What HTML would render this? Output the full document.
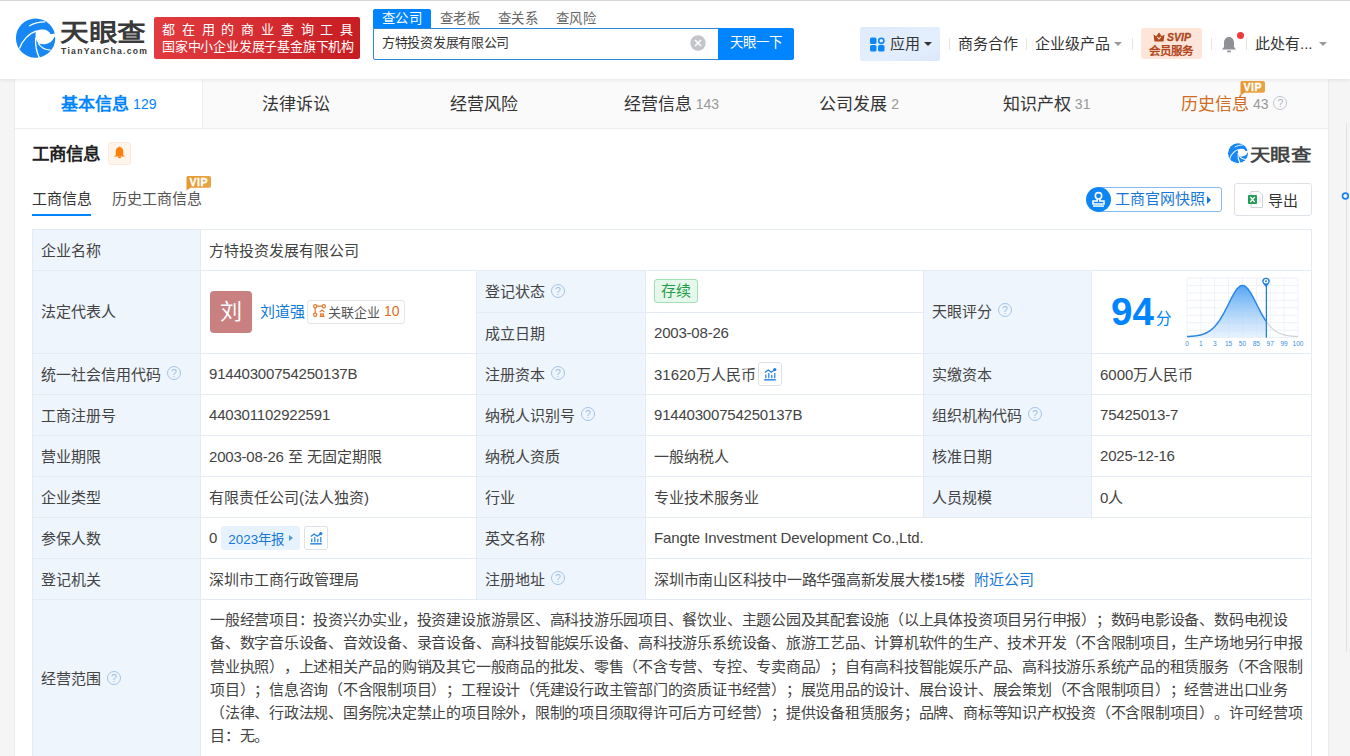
<!DOCTYPE html>
<html lang="zh-CN">
<head>
<meta charset="utf-8">
<style>
*{margin:0;padding:0;box-sizing:border-box}
html,body{width:1350px;height:756px;overflow:hidden}
body{background:#f5f5f5;font-family:"Liberation Sans",sans-serif;color:#333;position:relative}
.a{position:absolute;white-space:nowrap}
#hdr{position:absolute;left:0;top:0;width:1350px;height:79px;background:#fff;box-shadow:inset 0 1px #d6d6d6,0 1px 4px rgba(0,0,0,.09);z-index:5}
.sep{position:absolute;top:38px;width:1px;height:12px;background:#e4e4e4}
.caret{position:absolute;width:0;height:0;border-left:4px solid transparent;border-right:4px solid transparent;border-top:4px solid #333}
#card{position:absolute;left:14px;top:79px;width:1315px;height:700px;background:#fff;border-left:1px solid #ececec;border-right:1px solid #ebebeb}
.tab{position:absolute;top:1px;height:49px;font-size:17px;line-height:49px;text-align:center;color:#333}
.tab .n{font-size:14px;color:#999;margin-left:4px;position:relative;top:-1.5px;font-family:"Liberation Sans",sans-serif}
.q{display:inline-block;width:14px;height:14px;border:1.3px solid #a3c3e4;border-radius:50%;font-size:10.5px;line-height:12px;text-align:center;color:#9dbfe2;vertical-align:middle;font-family:"Liberation Sans",sans-serif}
.dg{letter-spacing:-0.2px}
#tbl{position:absolute;left:32px;top:229px;width:1280px;height:540px;background:#e4ebf2}
.c{position:absolute;background:#fff;font-size:15px;color:#434343;padding-left:8px;padding-bottom:2px;display:flex;align-items:center;white-space:nowrap}
.l{background:#eef5fd}
</style>
</head>
<body>
<div id="hdr">
  <!-- logo -->
  <svg class="a" style="left:12px;top:14px" width="48" height="48" viewBox="0 0 48 48">
<circle cx="23.6" cy="24.1" r="19.7" fill="#1787f5"/>
<path d="M24,16.8 C30,14.5 36.5,14.8 38.7,20.3 L46,19 L46,26 L42.6,22.8 C39.5,30 32,31.8 26.7,29.3 C23.5,27.5 23,21 24,16.8 Z" fill="#fff"/>
<path d="M17.1,11.9 C22,9.2 28,7.8 33.2,7.9" stroke="#fff" stroke-width="1.1" fill="none"/>
<path d="M7.4,34.6 C10,27 16.5,19.5 24.6,16.9" stroke="#fff" stroke-width="1.3" fill="none"/>
<path d="M23.6,23.5 C23.2,30 24.5,38 27.6,44.2" stroke="#fff" stroke-width="1.3" fill="none"/>
<path d="M26.2,29.0 C28.5,33.2 33,35.8 38.6,36.2" stroke="#fff" stroke-width="1.3" fill="none"/>
</svg>
  <div class="a" style="left:60px;top:20px;font-size:28px;font-weight:700;color:#3a3a3a;line-height:32px;transform:scale(1.024,0.845);transform-origin:0 0">天眼查</div>
  <div class="a" style="left:61px;top:46px;font-size:8.6px;font-weight:700;color:#3a3a3a;letter-spacing:1.3px;line-height:11px">TianYanCha.com</div>
  <div class="a" style="left:154px;top:17px;width:206px;height:42px;background:linear-gradient(100deg,#e23c40,#c71d22);border-radius:2px"></div>
  <div class="a" style="left:162px;top:22px;font-size:13px;color:#fff;letter-spacing:6.8px;line-height:16px">都在用的商业查询工具</div>
  <div class="a" style="left:162px;top:39px;font-size:13px;letter-spacing:-0.2px;color:#fff;line-height:16px">国家中小企业发展子基金旗下机构</div>

  <!-- search -->
  <div class="a" style="left:373px;top:9px;width:58px;height:19px;background:#0084ff;border-radius:2px 2px 0 0"></div>
  <div class="a" style="left:382px;top:10px;font-size:13.4px;letter-spacing:0.4px;color:#fff;line-height:18px">查公司</div>
  <div class="a" style="left:440px;top:10px;font-size:13.4px;letter-spacing:0.4px;color:#666;line-height:18px">查老板</div>
  <div class="a" style="left:498px;top:10px;font-size:13.4px;letter-spacing:0.4px;color:#666;line-height:18px">查关系</div>
  <div class="a" style="left:556px;top:10px;font-size:13.4px;letter-spacing:0.4px;color:#666;line-height:18px">查风险</div>
  <div class="a" style="left:373px;top:28px;width:346px;height:32px;border:1px solid #2f86d6;border-radius:0 0 0 2px;background:#fff"></div>
  <div class="a" style="left:382px;top:34px;font-size:13px;letter-spacing:-0.3px;color:#333;line-height:18px">方特投资发展有限公司</div>
  <svg class="a" style="left:690px;top:35px" width="16" height="16" viewBox="0 0 16 16"><circle cx="8" cy="8" r="7.7" fill="#c3c5ca"/><path d="M5 5L11 11M11 5L5 11" stroke="#fff" stroke-width="1.5"/></svg>
  <div class="a" style="left:718px;top:28px;width:76px;height:32px;background:#0084ff;border-radius:0 2px 2px 0"></div>
  <div class="a" style="left:730px;top:34px;font-size:13.5px;color:#fff;line-height:18px">天眼一下</div>

  <!-- right nav -->
  <div class="a" style="left:860px;top:27px;width:80px;height:34px;background:linear-gradient(160deg,#deebfc 0%,#e4effd 60%,#dce8fa 100%);border-radius:2px"></div>
  <svg class="a" style="left:870px;top:37px" width="15" height="15" viewBox="0 0 15 15">
    <rect x="0" y="0.5" width="6.5" height="6.5" rx="1.6" fill="#0c86f5"/>
    <circle cx="11.3" cy="3.8" r="2.6" fill="none" stroke="#0c86f5" stroke-width="1.6"/>
    <rect x="0" y="8" width="6.5" height="6.5" rx="1.6" fill="#0c86f5"/>
    <rect x="8" y="8" width="6.5" height="6.5" rx="1.6" fill="#0c86f5"/>
  </svg>
  <div class="a" style="left:890px;top:34px;font-size:15px;color:#333;line-height:20px">应用</div>
  <div class="caret" style="left:924px;top:42px;border-top-color:#333"></div>
  <div class="sep" style="left:949px"></div>
  <div class="a" style="left:958px;top:34px;font-size:15px;color:#333;line-height:20px">商务合作</div>
  <div class="sep" style="left:1026px"></div>
  <div class="a" style="left:1035px;top:34px;font-size:15px;color:#333;line-height:20px">企业级产品</div>
  <div class="caret" style="left:1114px;top:42px;border-top-color:#999"></div>
  <div class="sep" style="left:1132px"></div>
  <div class="a" style="left:1141px;top:28px;width:61px;height:31px;background:#fde5da;border-radius:3px"></div>
  <svg class="a" style="left:1153px;top:32px" width="12" height="10" viewBox="0 0 12 10"><path d="M0.5 2.5L3.2 4.3L6 0.5L8.8 4.3L11.5 2.5L10.5 9.5H1.5Z" fill="#b0461a"/><path d="M4.2 4.8L6 7L7.8 4.8" fill="none" stroke="#fde5da" stroke-width="1.1"/></svg>
  <div class="a" style="left:1167px;top:31px;font-size:10.5px;font-weight:700;font-style:italic;color:#b0461a;line-height:13px;-webkit-text-stroke:0.3px #b0461a">SVIP</div>
  <div class="a" style="left:1149px;top:44px;font-size:11.5px;font-weight:700;color:#b0461a;line-height:14px">会员服务</div>
  <div class="sep" style="left:1211px"></div>
  <svg class="a" style="left:1221px;top:36px" width="16" height="17" viewBox="0 0 16 17"><path d="M8 1C4.8 1 3 3.6 3 6.5V11L1 13.5H15L13 11V6.5C13 3.6 11.2 1 8 1Z" fill="#8f9197"/><rect x="6" y="14.6" width="4" height="1.6" rx="0.8" fill="#8f9197"/></svg>
  <div class="a" style="left:1237px;top:31.5px;width:7px;height:7px;border-radius:50%;background:#f03a3a"></div>
  <div class="sep" style="left:1246px"></div>
  <div class="a" style="left:1255px;top:34px;font-size:15px;color:#333;line-height:20px">此处有...</div>
  <div class="caret" style="left:1319px;top:42px;border-top-color:#999"></div>
</div>

<div id="card">
  <div class="a" style="left:0;top:0;width:1313px;height:50px;background:#fafafa;border-bottom:1px solid #eeeeee"></div>
  <div class="a" style="left:0;top:0;width:187.6px;height:50px;background:#fff;border-right:1px solid #eeeeee;border-bottom:1px solid #eeeeee"></div>
  <div class="tab" style="left:0.00px;width:187.57px;color:#0084ff;font-weight:700">基本信息<span class="n" style="color:#0084ff;font-weight:400">129</span></div>
<div class="tab" style="left:187.57px;width:187.57px">法律诉讼</div>
<div class="tab" style="left:375.14px;width:187.57px">经营风险</div>
<div class="tab" style="left:562.71px;width:187.57px">经营信息<span class="n">143</span></div>
<div class="tab" style="left:750.29px;width:187.57px">公司发展<span class="n">2</span></div>
<div class="tab" style="left:937.86px;width:187.57px">知识产权<span class="n">31</span></div>
<div class="tab" style="left:1125.43px;width:187.57px;color:#cf6c24">历史信息<span class="n">43</span><span class="q" style="border-color:#c3c6cc;color:#b0b4ba;margin-left:5px;width:14px;height:14px;line-height:12px;position:relative;top:-3px">?</span></div>
</div>


<svg class="a" style="left:1240px;top:81px;z-index:6" width="26" height="15" viewBox="0 0 26 15"><defs><linearGradient id="vg2" x1="0" x2="1"><stop offset="0" stop-color="#e8972a"/><stop offset="1" stop-color="#e6a54a"/></linearGradient></defs><path d="M1.8 0H23.2A1.8 1.8 0 0 1 25 1.8V10A1.8 1.8 0 0 1 23.2 11.8H4.5L0.5 14.5V1.8A1.8 1.8 0 0 1 1.8 0Z" fill="url(#vg2)"/><text x="12.8" y="9.6" font-family="Liberation Sans" font-size="10.5" font-weight="700" fill="#fff" text-anchor="middle" letter-spacing="0.6" stroke="#fff" stroke-width="0.3">VIP</text></svg>
<!-- section header -->
<div class="a" style="left:32px;top:142px;font-size:17.5px;font-weight:700;color:#222;line-height:24px">工商信息</div>
<div class="a" style="left:108px;top:142px;width:23px;height:23px;background:#fff5eb;border:1px solid #fcebdc;border-radius:3px"></div>
<svg class="a" style="left:114px;top:145.5px" width="11" height="13" viewBox="0 0 11 13"><path d="M5.5 0.4C5.2 0.4 5 0.6 5 0.9C3 1.3 1.8 3 1.8 5.2V9.2L0.3 9.9V10.4H10.7V9.9L9.2 9.2V5.2C9.2 3 8 1.3 6 0.9C6 0.6 5.8 0.4 5.5 0.4Z" fill="#ff7f0a"/><path d="M3.9 10.4H7.1C7.1 11.6 6.4 12.3 5.5 12.3C4.6 12.3 3.9 11.6 3.9 10.4Z" fill="#ff7f0a"/></svg>
<div class="a" style="left:32px;top:188px;font-size:15px;color:#333;line-height:22px">工商信息</div>
<div class="a" style="left:32px;top:214px;width:59px;height:2px;background:#0084ff"></div>
<div class="a" style="left:112px;top:188px;font-size:15px;color:#555;line-height:22px">历史工商信息</div>
<svg class="a" style="left:186px;top:176px" width="26" height="15" viewBox="0 0 26 15"><defs><linearGradient id="vg1" x1="0" x2="1"><stop offset="0" stop-color="#e8972a"/><stop offset="1" stop-color="#e6a54a"/></linearGradient></defs><path d="M1.8 0H23.2A1.8 1.8 0 0 1 25 1.8V10A1.8 1.8 0 0 1 23.2 11.8H4.5L0.5 14.5V1.8A1.8 1.8 0 0 1 1.8 0Z" fill="url(#vg1)"/><text x="12.8" y="9.6" font-family="Liberation Sans" font-size="10.5" font-weight="700" fill="#fff" text-anchor="middle" letter-spacing="0.6" stroke="#fff" stroke-width="0.3">VIP</text></svg>
<!-- right logo -->
<svg class="a" style="left:1226px;top:141px" width="24.4" height="24.4" viewBox="0 0 48 48">
<circle cx="23.6" cy="24.1" r="19.7" fill="#1787f5"/>
<path d="M24,16.8 C30,14.5 36.5,14.8 38.7,20.3 L46,19 L46,26 L42.6,22.8 C39.5,30 32,31.8 26.7,29.3 C23.5,27.5 23,21 24,16.8 Z" fill="#fff"/>
<path d="M17.1,11.9 C22,9.2 28,7.8 33.2,7.9" stroke="#fff" stroke-width="1.8" fill="none"/>
<path d="M7.4,34.6 C10,27 16.5,19.5 24.6,16.9" stroke="#fff" stroke-width="2" fill="none"/>
<path d="M23.6,23.5 C23.2,30 24.5,38 27.6,44.2" stroke="#fff" stroke-width="2" fill="none"/>
<path d="M26.2,29.0 C28.5,33.2 33,35.8 38.6,36.2" stroke="#fff" stroke-width="2" fill="none"/>
</svg>
<div class="a" style="left:1250px;top:145px;font-size:20px;font-weight:700;color:#444;line-height:25px;transform:scale(1.02,0.84);transform-origin:0 0">天眼查</div>
<!-- snapshot btn -->
<div class="a" style="left:1098px;top:187px;width:124px;height:25px;border:1px solid #86b9ef;border-radius:3px;background:#fff"></div>
<svg class="a" style="left:1086px;top:187px" width="25" height="25" viewBox="0 0 25 25"><circle cx="12.5" cy="12.5" r="12.5" fill="#0c86f5"/><circle cx="12.5" cy="8.8" r="3.2" fill="none" stroke="#fff" stroke-width="1.6"/><path d="M11.2 11.8V14H7V17H18V14H13.8V11.8" fill="none" stroke="#fff" stroke-width="1.6"/><rect x="7" y="18.3" width="11" height="1.5" fill="#fff"/></svg>
<div class="a" style="left:1115px;top:188px;font-size:15px;color:#1677d8;line-height:22px">工商官网快照</div>
<div class="caret" style="left:1207px;top:196px;border-top:4px solid transparent;border-bottom:4px solid transparent;border-left:4px solid #1677d8;border-right:0"></div>
<div class="a" style="left:1234px;top:183px;width:78px;height:33px;border:1px solid #dde2e8;border-radius:3px;background:#fff"></div>
<svg class="a" style="left:1248px;top:191px" width="15" height="17" viewBox="0 0 15 17"><path d="M3 0.5H11L14.5 4V16.5H3Z" fill="#fff" stroke="#cfd3d8"/><rect x="0" y="4" width="9" height="9" rx="1" fill="#1f9d55"/><path d="M2.3 6L6.7 11M6.7 6L2.3 11" stroke="#fff" stroke-width="1.3"/><path d="M10.5 7H12.5M10.5 9H12.5M10.5 11H12.5" stroke="#cfd3d8"/></svg>
<div class="a" style="left:1268px;top:190px;font-size:15px;color:#333;line-height:22px">导出</div>
<div class="a" style="left:1346px;top:123px;width:1px;height:529px;background:#e0e2e7"></div>
<svg class="a" style="left:1341px;top:191px" width="9" height="10" viewBox="0 0 9 10"><circle cx="4.4" cy="5" r="2.9" fill="none" stroke="#1a7fe8" stroke-width="1.6"/></svg>
<div id="tbl">
<div class="c l" style="left:1px;top:1px;width:167px;height:40px;">企业名称</div>

<div class="c" style="left:169px;top:1px;width:1110px;height:40px;">方特投资发展有限公司</div>

<div class="c l" style="left:1px;top:42px;width:167px;height:82px;padding-bottom:4px">法定代表人</div>

<div class="c" style="left:169px;top:42px;width:275px;height:82px;padding-bottom:0;padding-left:9px"><div style="width:42px;height:42px;border-radius:4px;background:#c98080;color:#fff;font-size:22px;line-height:42px;text-align:center">刘</div><span style="color:#0c7ae0;margin-left:8px;position:relative;top:-1.5px">刘道强</span><span style="display:inline-flex;align-items:center;height:24px;margin-left:2px;border:1px solid #e1e6ec;border-radius:3px;padding:0 4px 2px 5px;font-size:13px;color:#555"><svg width="13" height="13" viewBox="0 0 13 13" style="margin-right:2px;position:relative;top:-1px"><circle cx="2.2" cy="2.2" r="1.6" fill="none" stroke="#e8792e" stroke-width="1.2"/><circle cx="10.8" cy="2.2" r="1.6" fill="none" stroke="#e8792e" stroke-width="1.2"/><circle cx="2.2" cy="10.8" r="1.6" fill="none" stroke="#e8792e" stroke-width="1.2"/><path d="M3.8 2.2H9.2M2.2 3.8V9.2" stroke="#e8792e" stroke-width="1.2"/><path d="M6.6 8.2L9 6L11.4 8.2M7.6 9.2V12.5M10.4 9.2V12.5M6.6 12.5H11.6M9 9V12.5" fill="none" stroke="#e8792e" stroke-width="1.1"/></svg>关联企业<span style="color:#e0701f;margin-left:4px;font-size:14px;font-family:'Liberation Sans'">10</span></span></div>

<div class="c l" style="left:445px;top:42px;width:168px;height:41px;">登记状态<span class="q" style="margin-left:6px">?</span></div>

<div class="c" style="left:614px;top:42px;width:277px;height:41px;"><span style="display:inline-block;height:24px;line-height:22px;padding:0 6px;border:1px solid #a3dfb5;background:#e6f8eb;border-radius:3px;color:#1f9c4a;font-size:15px">存续</span></div>

<div class="c l" style="left:445px;top:84px;width:168px;height:40px;">成立日期</div>

<div class="c" style="left:614px;top:84px;width:277px;height:40px;"><span class="dg">2003-08-26</span></div>

<div class="c l" style="left:892px;top:42px;width:167px;height:82px;padding-bottom:4px">天眼评分<span class="q" style="margin-left:6px">?</span></div>

<div class="c" style="left:1060px;top:42px;width:219px;height:82px;display:block"><span style="position:absolute;left:19px;top:19px;font-size:38.5px;font-weight:700;color:#0084ff;font-family:'Liberation Sans';line-height:44px">94</span><span style="position:absolute;left:64px;top:37.5px;font-size:15.5px;color:#0084ff;line-height:20px">分</span>
<svg style="position:absolute;left:93px;top:4px" width="120" height="76" viewBox="0 0 120 76"><defs><linearGradient id="cg" x1="0" y1="0" x2="0" y2="1"><stop offset="0" stop-color="#4aa0f3" stop-opacity="0.95"/><stop offset="1" stop-color="#d9eafc" stop-opacity="0.6"/></linearGradient></defs>
<line x1="2.00" y1="3" x2="2.00" y2="62.60000000000002" stroke="#edf2f9" stroke-width="1"/>
<line x1="15.88" y1="3" x2="15.88" y2="62.60000000000002" stroke="#edf2f9" stroke-width="1"/>
<line x1="29.75" y1="3" x2="29.75" y2="62.60000000000002" stroke="#edf2f9" stroke-width="1"/>
<line x1="43.62" y1="3" x2="43.62" y2="62.60000000000002" stroke="#edf2f9" stroke-width="1"/>
<line x1="57.50" y1="3" x2="57.50" y2="62.60000000000002" stroke="#edf2f9" stroke-width="1"/>
<line x1="71.38" y1="3" x2="71.38" y2="62.60000000000002" stroke="#edf2f9" stroke-width="1"/>
<line x1="85.25" y1="3" x2="85.25" y2="62.60000000000002" stroke="#edf2f9" stroke-width="1"/>
<line x1="99.12" y1="3" x2="99.12" y2="62.60000000000002" stroke="#edf2f9" stroke-width="1"/>
<line x1="113.00" y1="3" x2="113.00" y2="62.60000000000002" stroke="#edf2f9" stroke-width="1"/>
<line x1="2" y1="3.00" x2="113" y2="3.00" stroke="#edf2f9" stroke-width="1"/>
<line x1="2" y1="10.45" x2="113" y2="10.45" stroke="#edf2f9" stroke-width="1"/>
<line x1="2" y1="17.90" x2="113" y2="17.90" stroke="#edf2f9" stroke-width="1"/>
<line x1="2" y1="25.35" x2="113" y2="25.35" stroke="#edf2f9" stroke-width="1"/>
<line x1="2" y1="32.80" x2="113" y2="32.80" stroke="#edf2f9" stroke-width="1"/>
<line x1="2" y1="40.25" x2="113" y2="40.25" stroke="#edf2f9" stroke-width="1"/>
<line x1="2" y1="47.70" x2="113" y2="47.70" stroke="#edf2f9" stroke-width="1"/>
<line x1="2" y1="55.15" x2="113" y2="55.15" stroke="#edf2f9" stroke-width="1"/>
<line x1="2" y1="62.60" x2="113" y2="62.60" stroke="#edf2f9" stroke-width="1"/>
<path d="M2.00,61.58 L2.50,61.56 L3.00,61.53 L3.50,61.50 L4.00,61.47 L4.50,61.44 L5.00,61.41 L5.50,61.37 L6.00,61.34 L6.50,61.30 L7.00,61.25 L7.50,61.21 L8.00,61.16 L8.50,61.11 L9.00,61.05 L9.50,61.00 L10.00,60.93 L10.50,60.87 L11.00,60.80 L11.50,60.72 L12.00,60.64 L12.50,60.56 L13.00,60.47 L13.50,60.37 L14.00,60.27 L14.50,60.16 L15.00,60.05 L15.50,59.93 L16.00,59.80 L16.50,59.66 L17.00,59.51 L17.50,59.36 L18.00,59.19 L18.50,59.02 L19.00,58.84 L19.50,58.64 L20.00,58.44 L20.50,58.22 L21.00,57.99 L21.50,57.75 L22.00,57.50 L22.50,57.23 L23.00,56.94 L23.50,56.65 L24.00,56.33 L24.50,56.00 L25.00,55.66 L25.50,55.30 L26.00,54.92 L26.50,54.52 L27.00,54.10 L27.50,53.67 L28.00,53.21 L28.50,52.74 L29.00,52.24 L29.50,51.72 L30.00,51.19 L30.50,50.63 L31.00,50.04 L31.50,49.44 L32.00,48.82 L32.50,48.17 L33.00,47.50 L33.50,46.81 L34.00,46.09 L34.50,45.35 L35.00,44.59 L35.50,43.81 L36.00,43.01 L36.50,42.19 L37.00,41.35 L37.50,40.48 L38.00,39.60 L38.50,38.70 L39.00,37.78 L39.50,36.85 L40.00,35.91 L40.50,34.94 L41.00,33.97 L41.50,32.99 L42.00,32.00 L42.50,31.00 L43.00,30.00 L43.50,29.00 L44.00,27.99 L44.50,26.99 L45.00,25.99 L45.50,25.00 L46.00,24.02 L46.50,23.06 L47.00,22.10 L47.50,21.17 L48.00,20.25 L48.50,19.37 L49.00,18.50 L49.50,17.67 L50.00,16.87 L50.50,16.10 L51.00,15.38 L51.50,14.69 L52.00,14.05 L52.50,13.46 L53.00,12.91 L53.50,12.42 L54.00,11.98 L54.50,11.59 L55.00,11.26 L55.50,10.99 L56.00,10.78 L56.50,10.62 L57.00,10.53 L57.50,10.50 L58.00,10.53 L58.50,10.62 L59.00,10.78 L59.50,10.99 L60.00,11.26 L60.50,11.59 L61.00,11.98 L61.50,12.42 L62.00,12.91 L62.50,13.46 L63.00,14.05 L63.50,14.69 L64.00,15.38 L64.50,16.10 L65.00,16.87 L65.50,17.67 L66.00,18.50 L66.50,19.37 L67.00,20.25 L67.50,21.17 L68.00,22.10 L68.50,23.06 L69.00,24.02 L69.50,25.00 L70.00,25.99 L70.50,26.99 L71.00,27.99 L71.50,29.00 L72.00,30.00 L72.50,31.00 L73.00,32.00 L73.50,32.99 L74.00,33.97 L74.50,34.94 L75.00,35.91 L75.50,36.85 L76.00,37.78 L76.50,38.70 L77.00,39.60 L77.50,40.48 L78.00,41.35 L78.50,42.19 L79.00,43.01 L79.50,43.81 L80.00,44.59 L80.50,45.35 L81.00,46.09 L81.00,62.60000000000002 L2,62.60000000000002 Z" fill="url(#cg)"/>
<path d="M81.00,46.09 L81.50,46.81 L82.00,47.50 L82.50,48.17 L83.00,48.82 L83.50,49.44 L84.00,50.04 L84.50,50.63 L85.00,51.19 L85.50,51.72 L86.00,52.24 L86.50,52.74 L87.00,53.21 L87.50,53.67 L88.00,54.10 L88.50,54.52 L89.00,54.92 L89.50,55.30 L90.00,55.66 L90.50,56.00 L91.00,56.33 L91.50,56.65 L92.00,56.94 L92.50,57.23 L93.00,57.50 L93.50,57.75 L94.00,57.99 L94.50,58.22 L95.00,58.44 L95.50,58.64 L96.00,58.84 L96.50,59.02 L97.00,59.19 L97.50,59.36 L98.00,59.51 L98.50,59.66 L99.00,59.80 L99.50,59.93 L100.00,60.05 L100.50,60.16 L101.00,60.27 L101.50,60.37 L102.00,60.47 L102.50,60.56 L103.00,60.64 L103.50,60.72 L104.00,60.80 L104.50,60.87 L105.00,60.93 L105.50,61.00 L106.00,61.05 L106.50,61.11 L107.00,61.16 L107.50,61.21 L108.00,61.25 L108.50,61.30 L109.00,61.34 L109.50,61.37 L110.00,61.41 L110.50,61.44 L111.00,61.47 L111.50,61.50 L112.00,61.53 L112.50,61.56 L113.00,61.58" fill="none" stroke="#cfd4da" stroke-width="1.2"/>
<path d="M2.00,61.58 L2.50,61.56 L3.00,61.53 L3.50,61.50 L4.00,61.47 L4.50,61.44 L5.00,61.41 L5.50,61.37 L6.00,61.34 L6.50,61.30 L7.00,61.25 L7.50,61.21 L8.00,61.16 L8.50,61.11 L9.00,61.05 L9.50,61.00 L10.00,60.93 L10.50,60.87 L11.00,60.80 L11.50,60.72 L12.00,60.64 L12.50,60.56 L13.00,60.47 L13.50,60.37 L14.00,60.27 L14.50,60.16 L15.00,60.05 L15.50,59.93 L16.00,59.80 L16.50,59.66 L17.00,59.51 L17.50,59.36 L18.00,59.19 L18.50,59.02 L19.00,58.84 L19.50,58.64 L20.00,58.44 L20.50,58.22 L21.00,57.99 L21.50,57.75 L22.00,57.50 L22.50,57.23 L23.00,56.94 L23.50,56.65 L24.00,56.33 L24.50,56.00 L25.00,55.66 L25.50,55.30 L26.00,54.92 L26.50,54.52 L27.00,54.10 L27.50,53.67 L28.00,53.21 L28.50,52.74 L29.00,52.24 L29.50,51.72 L30.00,51.19 L30.50,50.63 L31.00,50.04 L31.50,49.44 L32.00,48.82 L32.50,48.17 L33.00,47.50 L33.50,46.81 L34.00,46.09 L34.50,45.35 L35.00,44.59 L35.50,43.81 L36.00,43.01 L36.50,42.19 L37.00,41.35 L37.50,40.48 L38.00,39.60 L38.50,38.70 L39.00,37.78 L39.50,36.85 L40.00,35.91 L40.50,34.94 L41.00,33.97 L41.50,32.99 L42.00,32.00 L42.50,31.00 L43.00,30.00 L43.50,29.00 L44.00,27.99 L44.50,26.99 L45.00,25.99 L45.50,25.00 L46.00,24.02 L46.50,23.06 L47.00,22.10 L47.50,21.17 L48.00,20.25 L48.50,19.37 L49.00,18.50 L49.50,17.67 L50.00,16.87 L50.50,16.10 L51.00,15.38 L51.50,14.69 L52.00,14.05 L52.50,13.46 L53.00,12.91 L53.50,12.42 L54.00,11.98 L54.50,11.59 L55.00,11.26 L55.50,10.99 L56.00,10.78 L56.50,10.62 L57.00,10.53 L57.50,10.50 L58.00,10.53 L58.50,10.62 L59.00,10.78 L59.50,10.99 L60.00,11.26 L60.50,11.59 L61.00,11.98 L61.50,12.42 L62.00,12.91 L62.50,13.46 L63.00,14.05 L63.50,14.69 L64.00,15.38 L64.50,16.10 L65.00,16.87 L65.50,17.67 L66.00,18.50 L66.50,19.37 L67.00,20.25 L67.50,21.17 L68.00,22.10 L68.50,23.06 L69.00,24.02 L69.50,25.00 L70.00,25.99 L70.50,26.99 L71.00,27.99 L71.50,29.00 L72.00,30.00 L72.50,31.00 L73.00,32.00 L73.50,32.99 L74.00,33.97 L74.50,34.94 L75.00,35.91 L75.50,36.85 L76.00,37.78 L76.50,38.70 L77.00,39.60 L77.50,40.48 L78.00,41.35 L78.50,42.19 L79.00,43.01 L79.50,43.81 L80.00,44.59 L80.50,45.35 L81.00,46.09" fill="none" stroke="#2a86e6" stroke-width="1.5"/>
<line x1="81.4" y1="8" x2="81.4" y2="62.60000000000002" stroke="#1f80e2" stroke-width="1.3"/>
<path d="M77.2,6.5 A3.8,3.8 0 1 1 84.8,6.5 Q84.4,9 81,12 Q77.6,9 77.2,6.5 Z" fill="#1f80e2"/>
<circle cx="81" cy="6.300000000000011" r="2.3" fill="#fff"/><circle cx="81" cy="6.300000000000011" r="1" fill="#1f80e2"/>
<text x="2.00" y="70.69999999999999" font-size="6.6" font-family="Liberation Sans" fill="#3d8fe0" text-anchor="middle">0</text>
<text x="15.88" y="70.69999999999999" font-size="6.6" font-family="Liberation Sans" fill="#3d8fe0" text-anchor="middle">1</text>
<text x="29.75" y="70.69999999999999" font-size="6.6" font-family="Liberation Sans" fill="#3d8fe0" text-anchor="middle">3</text>
<text x="43.62" y="70.69999999999999" font-size="6.6" font-family="Liberation Sans" fill="#3d8fe0" text-anchor="middle">15</text>
<text x="57.50" y="70.69999999999999" font-size="6.6" font-family="Liberation Sans" fill="#3d8fe0" text-anchor="middle">50</text>
<text x="71.38" y="70.69999999999999" font-size="6.6" font-family="Liberation Sans" fill="#3d8fe0" text-anchor="middle">85</text>
<text x="85.25" y="70.69999999999999" font-size="6.6" font-family="Liberation Sans" fill="#3d8fe0" text-anchor="middle">97</text>
<text x="99.12" y="70.69999999999999" font-size="6.6" font-family="Liberation Sans" fill="#3d8fe0" text-anchor="middle">99</text>
<text x="113.00" y="70.69999999999999" font-size="6.6" font-family="Liberation Sans" fill="#3d8fe0" text-anchor="middle">100</text></svg></div>

<div class="c l" style="left:1px;top:125px;width:167px;height:40px;">统一社会信用代码<span class="q" style="margin-left:6px">?</span></div>

<div class="c" style="left:169px;top:125px;width:275px;height:40px;"><span class="dg">91440300754250137B</span></div>

<div class="c l" style="left:445px;top:125px;width:168px;height:40px;">注册资本<span class="q" style="margin-left:6px">?</span></div>

<div class="c" style="left:614px;top:125px;width:277px;height:40px;">31620万人民币<span style="display:inline-flex;align-items:center;justify-content:center;width:24px;height:24px;margin-top:2px;margin-left:2px;border:1px solid #dde2e8;border-radius:3px"><svg width="14" height="14" viewBox="0 0 14 14"><path d="M1.2 12.8H12.8" stroke="#3d8fe8" stroke-width="1.6"/><path d="M2.8 11.2V7.5M5.8 11.2V6M8.8 11.2V7.8M11.8 11.2V6" stroke="#1f7fe0" stroke-width="1.2"/><path d="M1.8 5.5L5.2 3L8.2 5.3L11 3.2" fill="none" stroke="#1f7fe0" stroke-width="1.2"/><circle cx="11.8" cy="2.6" r="1.6" fill="#1f7fe0"/></svg></span></div>

<div class="c l" style="left:892px;top:125px;width:167px;height:40px;">实缴资本</div>

<div class="c" style="left:1060px;top:125px;width:219px;height:40px;">6000万人民币</div>

<div class="c l" style="left:1px;top:166px;width:167px;height:40px;">工商注册号</div>

<div class="c" style="left:169px;top:166px;width:275px;height:40px;"><span class="dg">440301102922591</span></div>

<div class="c l" style="left:445px;top:166px;width:168px;height:40px;">纳税人识别号<span class="q" style="margin-left:6px">?</span></div>

<div class="c" style="left:614px;top:166px;width:277px;height:40px;"><span class="dg">91440300754250137B</span></div>

<div class="c l" style="left:892px;top:166px;width:167px;height:40px;">组织机构代码<span class="q" style="margin-left:6px">?</span></div>

<div class="c" style="left:1060px;top:166px;width:219px;height:40px;"><span class="dg">75425013-7</span></div>

<div class="c l" style="left:1px;top:207px;width:167px;height:40px;">营业期限</div>

<div class="c" style="left:169px;top:207px;width:275px;height:40px;"><span><span class="dg">2003-08-26</span> 至 无固定期限</span></div>

<div class="c l" style="left:445px;top:207px;width:168px;height:40px;">纳税人资质</div>

<div class="c" style="left:614px;top:207px;width:277px;height:40px;">一般纳税人</div>

<div class="c l" style="left:892px;top:207px;width:167px;height:40px;">核准日期</div>

<div class="c" style="left:1060px;top:207px;width:219px;height:40px;"><span class="dg">2025-12-16</span></div>

<div class="c l" style="left:1px;top:248px;width:167px;height:40px;">企业类型</div>

<div class="c" style="left:169px;top:248px;width:275px;height:40px;">有限责任公司(法人独资)</div>

<div class="c l" style="left:445px;top:248px;width:168px;height:40px;">行业</div>

<div class="c" style="left:614px;top:248px;width:277px;height:40px;">专业技术服务业</div>

<div class="c l" style="left:892px;top:248px;width:167px;height:40px;">人员规模</div>

<div class="c" style="left:1060px;top:248px;width:219px;height:40px;">0人</div>

<div class="c l" style="left:1px;top:289px;width:167px;height:40px;">参保人数</div>

<div class="c" style="left:169px;top:289px;width:275px;height:40px;"><span>0</span><span style="display:inline-flex;align-items:center;height:24px;margin-left:4px;margin-top:1px;background:#e6f2fd;border-radius:3px;padding:0 7px 0 7px;color:#1677d8;font-size:13.4px">2023年报<span style="display:inline-block;width:0;height:0;border-top:3.5px solid transparent;border-bottom:3.5px solid transparent;border-left:4px solid #4a9be8;margin-left:5px"></span></span><span style="display:inline-flex;align-items:center;justify-content:center;width:24px;height:24px;margin-top:2px;margin-left:4px;border:1px solid #dde2e8;border-radius:3px"><svg width="14" height="14" viewBox="0 0 14 14"><path d="M1.2 12.8H12.8" stroke="#3d8fe8" stroke-width="1.6"/><path d="M2.8 11.2V7.5M5.8 11.2V6M8.8 11.2V7.8M11.8 11.2V6" stroke="#1f7fe0" stroke-width="1.2"/><path d="M1.8 5.5L5.2 3L8.2 5.3L11 3.2" fill="none" stroke="#1f7fe0" stroke-width="1.2"/><circle cx="11.8" cy="2.6" r="1.6" fill="#1f7fe0"/></svg></span></div>

<div class="c l" style="left:445px;top:289px;width:168px;height:40px;">英文名称</div>

<div class="c" style="left:614px;top:289px;width:665px;height:40px;"><span style="letter-spacing:-0.1px">Fangte Investment Development Co.,Ltd.</span></div>

<div class="c l" style="left:1px;top:330px;width:167px;height:40px;">登记机关</div>

<div class="c" style="left:169px;top:330px;width:275px;height:40px;">深圳市工商行政管理局</div>

<div class="c l" style="left:445px;top:330px;width:168px;height:40px;">注册地址<span class="q" style="margin-left:6px">?</span></div>

<div class="c" style="left:614px;top:330px;width:665px;height:40px;"><span style="letter-spacing:-0.25px">深圳市南山区科技中一路华强高新发展大楼15楼</span><span style="color:#1677d8;margin-left:9px">附近公司</span></div>

<div class="c l" style="left:1px;top:371px;width:167px;height:157px;">经营范围<span class="q" style="margin-left:6px">?</span></div>

<div class="c" style="left:169px;top:371px;width:1110px;height:157px;display:block"><div style="position:absolute;left:9px;top:8px;font-size:15px;letter-spacing:-0.235px;line-height:23.3px;text-spacing-trim:space-all">一般经营项目：投资兴办实业，投资建设旅游景区、高科技游乐园项目、餐饮业、主题公园及其配套设施（以上具体投资项目另行申报）；数码电影设备、数码电视设<br>备、数字音乐设备、音效设备、录音设备、高科技智能娱乐设备、高科技游乐系统设备、旅游工艺品、计算机软件的生产、技术开发（不含限制项目，生产场地另行申报<br>营业执照），上述相关产品的购销及其它一般商品的批发、零售（不含专营、专控、专卖商品）；自有高科技智能娱乐产品、高科技游乐系统产品的租赁服务（不含限制<br>项目）；信息咨询（不含限制项目）；工程设计（凭建设行政主管部门的资质证书经营）；展览用品的设计、展台设计、展会策划（不含限制项目）；经营进出口业务<br>（法律、行政法规、国务院决定禁止的项目除外，限制的项目须取得许可后方可经营）；提供设备租赁服务；品牌、商标等知识产权投资（不含限制项目）。许可经营项<br>目：无。</div></div>
</div>
</body>
</html>
